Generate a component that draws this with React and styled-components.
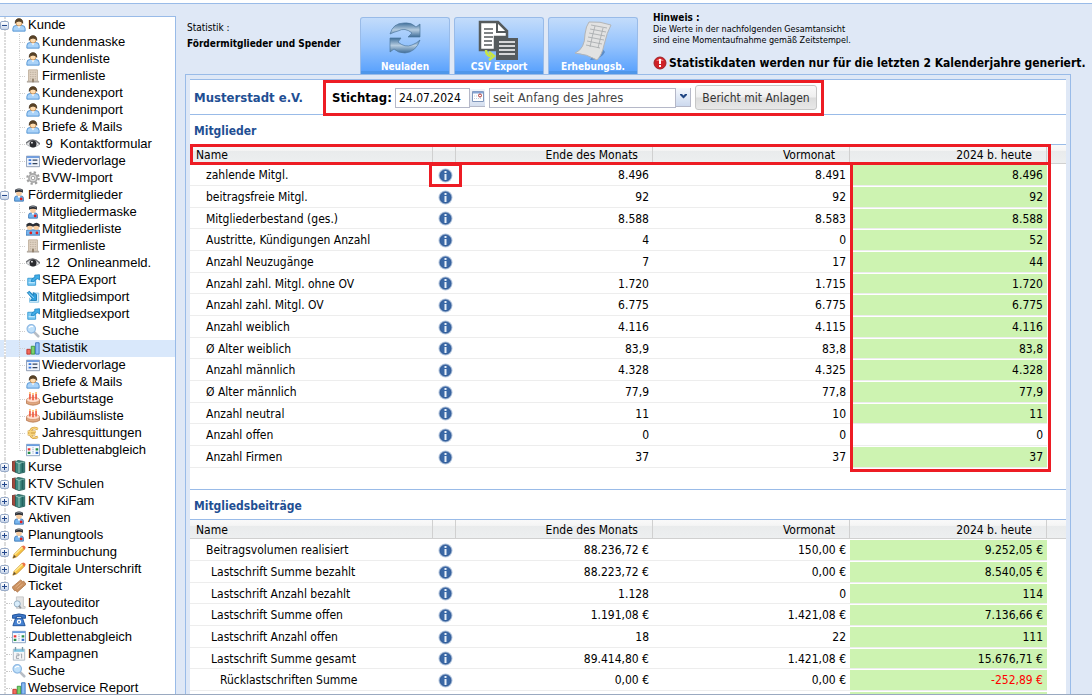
import React from "react";
import styled, { createGlobalStyle } from "styled-components";

const GlobalStyle = createGlobalStyle`
  * {
    box-sizing: border-box;
  }
  body {
    margin: 0;
    background: #fff;
    color: #000;
    font-family: "DejaVu Sans Condensed", "DejaVu Sans", sans-serif;
    font-size: 12px;
  }
  button, input, select {
    font-family: inherit;
  }
`;

const Shell = styled.div`
  display: flex;
  height: 100vh;
  padding-top: 3px;
  border-bottom: 1px solid #9aa9c0;
  overflow: hidden;
`;

const Side = styled.nav`
  flex: 0 0 176px;
  display: flex;
  padding-top: 12px;
  background: #dfe8f6;
  border-top: 1px solid #99bbe8;
`;

const Tree = styled.ul`
  flex: 1;
  min-width: 0;
  margin: 0;
  padding: 0;
  list-style: none;
  overflow: auto;
  scrollbar-width: none;
  background: #fff;
  border-top: 1px solid #99bbe8;
  border-right: 1px solid #99bbe8;
`;

const Branch = styled.ul`
  margin: 0;
  padding: 0;
  list-style: none;
`;

const Row = styled.div`
  display: flex;
  align-items: center;
  height: 17px;
  background: ${(p) => (p.$selected ? "#d9e8fb" : "transparent")};
`;

const Gutter = styled.span`
  align-self: stretch;
  flex: 0 0 12px;
  display: flex;
  align-items: center;
  background: repeating-linear-gradient(#dcdcdc 0 2px, #fff 2px 3px) 4px 0 / 2px 100% no-repeat;
`;

const Elbow = styled.span`
  align-self: stretch;
  flex: 0 0 14px;
  background:
    repeating-linear-gradient(#d0d0d0 0 1px, transparent 1px 2px) 7px 0 / 1px ${(p) => (p.$last ? "50%" : "100%")} no-repeat,
    repeating-linear-gradient(90deg, #d0d0d0 0 1px, transparent 1px 2px) 8px 50% / 5px 1px no-repeat;
`;

const Dash = styled.span`
  width: 6px;
  margin-left: 6px;
  border-top: 1px dotted #c8c8c8;
`;

const Expander = styled.button`
  display: flex;
  align-items: center;
  justify-content: center;
  width: 9px;
  height: 9px;
  padding: 0;
  border: 1px solid #98abc8;
  border-radius: 2px;
  background: linear-gradient(#fff, #c9d6ea);
`;

const TreeLink = styled.a`
  display: flex;
  align-items: center;
  gap: 2px;
  flex: 1;
  min-width: 0;
  padding-bottom: 2px;
  color: #000;
  font-family: "Liberation Sans", Arial, sans-serif;
  font-size: 13px;
  line-height: 15px;
  white-space: pre;
  text-decoration: none;
  svg {
    flex: none;
  }
`;

const Main = styled.main`
  flex: 1;
  min-width: 0;
  display: flex;
  flex-direction: column;
  padding: 0 21px 0 9px;
  background: #dfe8f6;
  border-top: 1px solid #99bbe8;
`;

const Header = styled.header`
  display: flex;
  height: 70px;
  padding-left: 2px;
  margin-right: -21px;
  white-space: nowrap;
`;

const PageTitle = styled.div`
  flex: 0 0 173px;
  padding-top: 16px;
  font-size: 10px;
  line-height: 16px;
`;

const ToolButtons = styled.div`
  display: flex;
  align-items: flex-end;
  gap: 4px;
`;

const ToolButton = styled.button`
  display: flex;
  flex-direction: column;
  align-items: center;
  justify-content: space-between;
  width: 90px;
  height: 57px;
  padding: 2px 0 1px;
  border: 1px solid #99bbe8;
  border-bottom: 0;
  border-radius: 3px 3px 0 0;
  background: linear-gradient(#c3dcfb, #93c2fd 50%, #559ffd);
  box-shadow: inset 0 -3px #4f97ea;
  color: #fff;
  font-size: 10px;
  font-weight: bold;
  line-height: 12px;
  svg {
    margin-bottom: -4px;
  }
`;

const Notice = styled.div`
  padding: 7px 0 0 15px;
  font-size: 9px;
  line-height: 11px;
`;

const NoticeTitle = styled.div`
  font-size: 10px;
  font-weight: bold;
  line-height: 13px;
`;

const Warning = styled.div`
  display: flex;
  align-items: center;
  gap: 2px;
  margin-top: 9px;
  font-size: 12px;
  font-weight: bold;
  line-height: 16px;
`;

const Panel = styled.div`
  flex: 1;
  min-height: 0;
  padding: 4px 4px 0;
  overflow: auto;
  scrollbar-width: none;
  border: 1px solid #99bbe8;
  border-bottom: 0;
`;

const Sheet = styled.div`
  background: #fff;
`;

const Filter = styled.form`
  display: flex;
  align-items: center;
  height: 36px;
  padding-left: 4px;
  border-top: 1px solid #99bbe8;
  border-bottom: 1px solid #99bbe8;
`;

const Club = styled.div`
  flex: 0 0 129px;
  color: #1f4f93;
  font-size: 13px;
  font-weight: bold;
`;

const Mark = styled.div`
  position: absolute;
  z-index: 1;
  border: 3px solid #ed1c24;
  pointer-events: none;
`;

const FilterMark = styled(Mark)`
  inset: 1px 0 -1px;
`;

const HeadMark = styled(Mark)`
  top: 0;
  left: 0;
  right: 15px;
  height: 21px;
`;

const ColumnMark = styled(Mark)`
  top: 18px;
  right: 15px;
  bottom: -4px;
  width: 201px;
`;

const InfoMark = styled(Mark)`
  inset: -2px -6px -2px -4px;
`;

const Controls = styled.div`
  position: relative;
  display: flex;
  align-items: center;
  height: 36px;
  padding: 1px 7px 0 9px;
`;

const DateLabel = styled.label`
  width: 63px;
  font-size: 13px;
  font-weight: bold;
`;

const DateInput = styled.input`
  width: 75px;
  height: 20px;
  padding: 0 3px;
  border: 1px solid #b5b8c8;
  font-size: 12px;
  outline: none;
`;

const Trigger = styled.button`
  display: flex;
  align-items: flex-start;
  justify-content: center;
  width: 15px;
  height: 18px;
  margin-right: 4px;
  padding: 2px 0 0;
  border: 0;
  border-bottom: 1px solid #b5b8c8;
  background: linear-gradient(#f3f6fb, #d5dfef);
`;

const SelectWrap = styled.div`
  position: relative;
  width: 202px;
  height: 20px;
`;

const Select = styled.select`
  appearance: none;
  width: 187px;
  height: 20px;
  padding: 0 3px;
  border: 1px solid #b5b8c8;
  border-radius: 0;
  background: #fff;
  color: #444;
  font-size: 13px;
`;

const Caret = styled.span`
  position: absolute;
  top: 0;
  right: 0;
  display: flex;
  align-items: center;
  justify-content: center;
  width: 16px;
  height: 19px;
  border: 1px solid #b5b8c8;
  border-top: 0;
  background: linear-gradient(#f5f8fd, #ccd9ee);
  pointer-events: none;
`;

const ReportButton = styled.button`
  width: 122px;
  height: 25px;
  margin-left: 4px;
  padding: 0;
  border: 1px solid #c6c6c6;
  border-radius: 3px;
  background: linear-gradient(#fafafa, #efefef 48%, #dcdcdc 52%, #e8e8e8);
  color: #333;
  font-size: 12px;
  white-space: nowrap;
`;

const Section = styled.section`
  padding-bottom: 21px;
  & + & {
    border-top: 1px solid #99bbe8;
  }
`;

const SectionTitle = styled.h2`
  margin: 0;
  padding: 2px 4px 0;
  height: 29px;
  color: #1f4f93;
  font-size: 12px;
  font-weight: bold;
  line-height: 29px;
`;

const TableWrap = styled.div`
  position: relative;
`;

const Table = styled.table`
  width: 100%;
  table-layout: fixed;
  border-spacing: 0;
  border-top: 1px solid #99bbe8;
`;

const Th = styled.th`
  width: ${(p) => p.$width};
  height: 19px;
  padding: ${(p) => (p.$right ? "2px 14px 0 0" : "2px 0 0 6px")};
  border-right: ${(p) => (p.$end ? "0" : "1px solid #d0d0d0")};
  border-bottom: 1px solid #d0d0d0;
  background: linear-gradient(#f9f9f9, #f5f5f5 30%, #e9ebec 34%, #edeff0);
  font-weight: normal;
  line-height: 16px;
  text-align: ${(p) => (p.$right ? "right" : "left")};
  white-space: nowrap;
`;

const Tr = styled.tr`
  height: 22px;
  &:nth-child(3n) {
    height: 21px;
  }
`;

const Td = styled.td`
  padding: 0 4px 0 0;
  border-top: 1px solid #fff;
  border-bottom: 1px solid #ededed;
  background: ${(p) => (p.$green ? "#cdf3b1" : "transparent")};
  background-clip: padding-box;
  color: ${(p) => (p.$negative ? "#f00" : "#000")};
  line-height: 18px;
  text-align: right;
  white-space: nowrap;
`;

const NameTd = styled(Td)`
  padding-left: ${(p) => p.$indent}px;
  text-align: left;
`;

const InfoTd = styled(Td)`
  position: relative;
  padding: 0;
  text-align: center;
`;

const InfoButton = styled.button`
  display: block;
  width: 15px;
  height: 15px;
  margin: 0 0 0 5px;
  padding: 0;
  border: 0;
  background: none;
`;

const drawings = {
  user: (
    <>
      <path d="M1 15V12Q1 8.500 5 8.500H11Q15 8.500 15 12V15Z" fill="#a9d2f8" stroke="#4c8fd0" />
      <path d="M6 8.500 8 12 10 8.500Z" fill="#fff" />
      <circle cx="8" cy="5.500" r="3.600" fill="#ffdcae" stroke="#b5702e" strokeWidth=".7" />
      <path d="M3.800 6Q3.500.8 8 .8T12.200 6Q11.500 3.500 8 3.500T3.800 6Z" fill="#5d4527" stroke="#46341e" />
    </>
  ),
  nurse: (
    <>
      <path d="M3 15V11.500Q3 9 6 9H10Q13 9 13 11.500V15Z" fill="#77b6ef" stroke="#3975b4" />
      <path d="M6.500 9 8 12 9.500 9Z" fill="#fff" />
      <circle cx="8" cy="6" r="3.200" fill="#f8cda0" />
      <path d="M3.500 5.500V2Q8-1 12.500 2V5.500Q11 4.200 8 4.200T3.500 5.500Z" fill="#2b2e35" />
      <path d="M4.500 2.500Q8 .5 11.500 2.500" fill="none" stroke="#8d939c" />
      <circle cx="10.500" cy="12.500" r="1.600" fill="#e12020" />
    </>
  ),
  nurses: (
    <>
      <path d="M0 15V11Q0 9 3 9H13Q16 9 16 11V15Z" fill="#77b6ef" stroke="#3975b4" />
      <circle cx="4.300" cy="6" r="3.200" fill="#f8cda0" />
      <circle cx="11.700" cy="6" r="3.200" fill="#f8cda0" />
      <path d="M.5 6V2.500Q4-1 8 2.500 12-1 15.500 2.500V6Q12 3 8 5.500 4 3 .5 6Z" fill="#2b2e35" />
      <circle cx="5.500" cy="12.500" r="1.600" fill="#e12020" />
      <circle cx="12.500" cy="12.500" r="1.600" fill="#e12020" />
    </>
  ),
  building: (
    <>
      <path d="M3 1H13V14H3Z" fill="#e3d6c6" stroke="#b7a793" />
      <path d="M5 3V12M7 3V12M9 3V12M11 3V12" stroke="#b9aa99" strokeDasharray="1.500 1" />
      <path d="M1 14.500H15" stroke="#b5aca2" strokeWidth="2" />
      <path d="M7 11H9V15H7Z" fill="#8f7d68" />
    </>
  ),
  eye: (
    <>
      <path d="M0 8Q8-1 16 8 8 15 0 8Z" fill="#e6e7e9" stroke="#a5a8ac" />
      <path d="M0 7Q8-.5 16 8" fill="none" stroke="#707277" strokeWidth="1.500" />
      <circle cx="8" cy="8" r="4" fill="#2b2c30" />
      <circle cx="6.800" cy="6.500" r="1" fill="#fff" />
    </>
  ),
  form: (
    <>
      <path d="M.5 2.500H15.500V14.500H.5Z" fill="#eef3fb" stroke="#8394ad" />
      <path d="M1 3.500H15" stroke="#6898dd" strokeWidth="2" />
      <path d="M3 7H6M3 11H6" stroke="#3874d8" strokeWidth="2" />
      <path d="M7.500 7H13M7.500 11H13" stroke="#34445c" strokeWidth="1.500" />
    </>
  ),
  gear: (
    <>
      <circle cx="8" cy="8" r="6.500" fill="none" stroke="#a0a0a0" strokeWidth="2.500" strokeDasharray="2.600 2.500" />
      <circle cx="8" cy="8" r="4.700" fill="#dcdcdc" stroke="#a8a8a8" strokeWidth="1.800" />
      <circle cx="8" cy="8" r="2" fill="#fff" stroke="#999" />
    </>
  ),
  export: (
    <>
      <path d="M2 6H11V14H2Z" fill="#7ecbf5" stroke="#3297d1" />
      <path d="M6 10Q6 5.500 10 5V2.500L15.500 2V8L13.500 6.500Q10 7 9 10Z" fill="#41aee8" stroke="#2187c4" />
      <path d="M3 11H10" stroke="#d4f1ff" />
    </>
  ),
  import: (
    <>
      <path d="M7 3.500H14.500V14H4V9" fill="#d4effc" stroke="#84c4e6" />
      <path d="M1.500 3 4 1.500 8.500 6V3L12 5V12H5L7 9.500Z" fill="#2e9fde" stroke="#1a79b4" />
      <path d="M3 3.500 9 9" stroke="#a6dcf8" />
    </>
  ),
  search: (
    <>
      <path d="M9 9 14 14" stroke="#b7bdc5" strokeWidth="3" strokeLinecap="round" />
      <circle cx="6" cy="5.500" r="4.800" fill="#bfe0fa" stroke="#8fb9e3" strokeWidth="1.400" />
      <path d="M3.500 4.500Q5 2 8 3" fill="none" stroke="#fff" strokeWidth="1.300" />
    </>
  ),
  chart: (
    <>
      <path d="M1 9.500H5V15H1Z" fill="#f26c5f" stroke="#bd3028" />
      <path d="M6 6H10V15H6Z" fill="#7cd26b" stroke="#37943a" />
      <path d="M11 2H15V15H11Z" fill="#8cbdf5" stroke="#316fba" />
    </>
  ),
  cake: (
    <>
      <path d="M.5 9H15.500V13Q8 17 .5 13Z" fill="#e0a880" stroke="#b87b55" />
      <ellipse cx="8" cy="9" rx="7.500" ry="3" fill="#ffdfce" stroke="#cc8963" strokeWidth=".7" />
      <path d="M4.500 2V8.500M8 3V9.500M11.500 2V8.500" stroke="#ef543a" strokeWidth="1.800" />
      <path d="M4.500 0V2M8 1V3M11.500 0V2" stroke="#ffad43" strokeWidth="1.500" />
    </>
  ),
  euro: (
    <>
      <path d="M13.500 3.500Q6-.5 4.500 8 6 16 13.500 12.500M2 6.500H11M2 9.500H10.500" fill="none" stroke="#c99437" strokeWidth="2.800" />
      <path d="M13.500 3.500Q6-.5 4.500 8 6 16 13.500 12.500M2 6.500H11M2 9.500H10.500" fill="none" stroke="#f8d57d" strokeWidth="1.600" />
    </>
  ),
  list: (
    <>
      <path d="M.5 1.500H15.500V14.500H.5Z" fill="#f6faff" stroke="#809bbb" />
      <path d="M1 2.500H15" stroke="#679de0" strokeWidth="2" />
      <path d="M2 6H5V8.500H2Z" fill="#e33" />
      <path d="M2 10H5V12.500H2ZM11 6H14V8.500H11Z" fill="#288f46" />
      <path d="M11 10H14V12.500H11Z" fill="#326dca" />
      <path d="M8 5V13" stroke="#6f87a5" strokeDasharray="1 1" />
    </>
  ),
  books: (
    <>
      <path d="M0 2 4 1V14L0 12Z" fill="#a0493d" stroke="#71342c" />
      <path d="M4 2 7 .5 14.500 2V14L8 15.500 4 14Z" fill="#3f8880" stroke="#28605c" />
      <path d="M4 2 8 4 14.500 2M8 4V15" fill="none" stroke="#a9d5cb" />
      <path d="M12 3V14" stroke="#22625f" strokeWidth="2" />
    </>
  ),
  pencil: (
    <>
      <path d="M1 15 2.500 10.500 11.500 1.500 14.500 4.500 5.500 13.500Z" fill="#f8c443" stroke="#c99330" />
      <path d="M11 2 12.500.5Q15.500.5 15.500 3.500L14 5Z" fill="#ed7148" />
      <path d="M3 11 12 2.500" stroke="#ffec9a" strokeWidth="1.500" />
      <path d="M1 15 2.500 11.500 4.500 13.500Z" fill="#594c3c" />
    </>
  ),
  ticket: (
    <>
      <path d="M0 9.500 10 1 12 3 13.500 2.500 16 6 6 15 4.500 13 3 13.500Z" fill="#cb9160" stroke="#b07a4e" />
      <path d="M4 9 10 4M6 11 12 6" stroke="#e5b88e" />
    </>
  ),
  layout: (
    <>
      <path d="M5 1H13V12H15V14H5Z" fill="#e4e4e4" stroke="#c2c2c2" />
      <circle cx="6" cy="9" r="3.500" fill="#d9edfb" stroke="#8ba7bd" />
      <path d="M8 11 10 14" stroke="#8b929b" strokeWidth="2" />
    </>
  ),
  phone: (
    <>
      <path d="M.5 2.500Q8-.5 15.500 2.500V6H11V4H5V6H.5Z" fill="#3d77c9" stroke="#174b95" />
      <path d="M4 6H12L15 14.500H1Z" fill="#4682d2" stroke="#174b95" />
      <circle cx="8" cy="10" r="2.500" fill="#fff" />
      <circle cx="8" cy="10" r="1" fill="#346ab1" />
    </>
  ),
  calendar: (
    <>
      <path d="M1.500 2.500H14.500V15H1.500Z" fill="#f5f6f8" stroke="#a8b5bf" />
      <path d="M2 4H14" stroke="#7fc7e5" strokeWidth="3" />
      <path d="M4 0V4M12 0V4" stroke="#7c99aa" strokeWidth="1.500" />
      <path d="M5 8H8V10H5V13H8M10 8H11V13" fill="none" stroke="#939aa3" />
    </>
  ),
};

const Icon = ({ name }) => (
  <svg width="14" height="14" viewBox="0 0 16 16" aria-hidden="true">
    {drawings[name]}
  </svg>
);

const InfoIcon = () => (
  <svg width="15" height="15" viewBox="0 0 15 15" aria-hidden="true">
    <circle cx="7.500" cy="7.500" r="7" fill="#b3c5dd" />
    <circle cx="7.500" cy="7.500" r="5.500" fill="#3a68a6" stroke="#2b5796" />
    <path d="M6.500 3H8.500V5H6.500ZM6.500 6H8.500V12H6.500Z" fill="#e8eff8" />
  </svg>
);

const AlertIcon = () => (
  <svg width="14" height="14" viewBox="0 0 14 14" aria-hidden="true">
    <circle cx="7" cy="7" r="6" fill="#cf2127" stroke="#9e2327" />
    <path d="M3 5Q7 0 11 5" fill="#ed7474" />
    <path d="M6 3H8V8H6ZM6 9H8V11H6Z" fill="#fff" />
  </svg>
);

const ReloadIcon = () => (
  <svg width="34" height="38" viewBox="0 0 34 38" aria-hidden="true">
    <defs>
      <linearGradient id="steel" x2="0" y2="1">
        <stop stopColor="#3f6f9b" />
        <stop offset=".5" stopColor="#b5cce0" />
        <stop offset="1" stopColor="#3d6c98" />
      </linearGradient>
    </defs>
    <path d="M2 14Q5 3 16 3Q23 2 28 7L32 4V17H20L24 13Q17 7 10 11Q6 12 2 14Z" fill="url(#steel)" stroke="#4f799f" strokeWidth=".7" />
    <path d="M32 20Q28 32 17 33Q10 33 6 29L2 32V18H13L10 22Q17 28 24 25Q29 23 32 20Z" fill="url(#steel)" stroke="#4f799f" strokeWidth=".7" />
  </svg>
);

const CsvIcon = () => (
  <svg width="42" height="43" viewBox="0 0 42 43" aria-hidden="true">
    <path d="M2 2H20L29 11V17H17V30H2Z" fill="#fff" stroke="#555b5d" strokeWidth="2.500" />
    <path d="M19 2V12H29" fill="none" stroke="#555b5d" strokeWidth="2" />
    <path d="M6 9H15M6 13H15M6 17H15M6 21H14M6 25H14" stroke="#555b5d" strokeWidth="1.500" />
    <path d="M18 18H40V40H18Z" fill="#555b5d" />
    <path d="M21 22H37M21 26H37M21 30H37M21 34H37" stroke="#fff" strokeWidth="1.500" />
    <path d="M8 30Q8 36 13 36M11 32 16 36 11 40" fill="none" stroke="#c8e546" strokeWidth="2.500" />
  </svg>
);

const SheetIcon = () => (
  <svg width="40" height="41" viewBox="0 0 40 41" aria-hidden="true">
    <path d="M17 40Q29 39 32 32L28 27Z" fill="#315e91" opacity=".5" />
    <path d="M16 2Q27 1 38 5Q34 12 31 25Q29 35 24 40Q14 34 2 33Q12 29 12 14Q13 6 16 2Z" fill="#e2e2e2" stroke="#b2b5b8" />
    <path d="M18 5 34 8M17 9 33 12M16 13 32 16M15 17 31 20M14 21 29 24M13 25 27 28M22 6Q19 17 17 27M30 8 25 28" fill="none" stroke="#a5a8ab" strokeWidth=".8" />
  </svg>
);

const tree = [
  {
    icon: "user",
    label: "Kunde",
    children: [
      ["user", "Kundenmaske"],
      ["user", "Kundenliste"],
      ["building", "Firmenliste"],
      ["user", "Kundenexport"],
      ["user", "Kundenimport"],
      ["user", "Briefe & Mails"],
      ["eye", "9  Kontaktformular"],
      ["form", "Wiedervorlage"],
      ["gear", "BVW-Import"],
    ],
  },
  {
    icon: "nurse",
    label: "Fördermitglieder",
    children: [
      ["nurse", "Mitgliedermaske"],
      ["nurses", "Mitgliederliste"],
      ["building", "Firmenliste"],
      ["eye", "12  Onlineanmeld."],
      ["export", "SEPA Export"],
      ["import", "Mitgliedsimport"],
      ["export", "Mitgliedsexport"],
      ["search", "Suche"],
      ["chart", "Statistik"],
      ["form", "Wiedervorlage"],
      ["user", "Briefe & Mails"],
      ["cake", "Geburtstage"],
      ["cake", "Jubiläumsliste"],
      ["euro", "Jahresquittungen"],
      ["list", "Dublettenabgleich"],
    ],
  },
  { icon: "books", label: "Kurse", closed: true },
  { icon: "books", label: "KTV Schulen", closed: true },
  { icon: "books", label: "KTV KiFam", closed: true },
  { icon: "nurse", label: "Aktiven", closed: true },
  { icon: "nurse", label: "Planungtools", closed: true },
  { icon: "pencil", label: "Terminbuchung", closed: true },
  { icon: "pencil", label: "Digitale Unterschrift", closed: true },
  { icon: "ticket", label: "Ticket", closed: true },
  { icon: "layout", label: "Layouteditor" },
  { icon: "phone", label: "Telefonbuch" },
  { icon: "list", label: "Dublettenabgleich" },
  { icon: "calendar", label: "Kampagnen" },
  { icon: "search", label: "Suche" },
  { icon: "chart", label: "Webservice Report" },
];

// name, end of month, previous month, year to date
const members = [
  ["zahlende Mitgl.", "8.496", "8.491", "8.496"],
  ["beitragsfreie Mitgl.", "92", "92", "92"],
  ["Mitgliederbestand (ges.)", "8.588", "8.583", "8.588"],
  ["Austritte, Kündigungen Anzahl", "4", "0", "52"],
  ["Anzahl Neuzugänge", "7", "17", "44"],
  ["Anzahl zahl. Mitgl. ohne OV", "1.720", "1.715", "1.720"],
  ["Anzahl zahl. Mitgl. OV", "6.775", "6.775", "6.775"],
  ["Anzahl weiblich", "4.116", "4.115", "4.116"],
  ["Ø Alter weiblich", "83,9", "83,8", "83,8"],
  ["Anzahl männlich", "4.328", "4.325", "4.328"],
  ["Ø Alter männlich", "77,9", "77,8", "77,9"],
  ["Anzahl neutral", "11", "10", "11"],
  ["Anzahl offen", "0", "0", "0"],
  ["Anzahl Firmen", "37", "37", "37"],
];

const fees = [
  ["Beitragsvolumen realisiert", "88.236,72 €", "150,00 €", "9.252,05 €"],
  ["Lastschrift Summe bezahlt", "88.223,72 €", "0,00 €", "8.540,05 €", 1],
  ["Lastschrift Anzahl bezahlt", "1.128", "0", "114", 1],
  ["Lastschrift Summe offen", "1.191,08 €", "1.421,08 €", "7.136,66 €", 1],
  ["Lastschrift Anzahl offen", "18", "22", "111", 1],
  ["Lastschrift Summe gesamt", "89.414,80 €", "1.421,08 €", "15.676,71 €", 1],
  ["Rücklastschriften Summe", "0,00 €", "0,00 €", "-252,89 €", 2],
];

const indents = [16, 21, 30];

const TreeNode = ({ node }) => (
  <li>
    <Row>
      <Gutter>
        {node.children || node.closed ? (
          <Expander aria-label={node.label}>
            <svg width="5" height="5" viewBox="0 0 5 5">
              <path d={node.closed ? "M0 2.500H5M2.500 0V5" : "M0 2.500H5"} stroke="#24488c" />
            </svg>
          </Expander>
        ) : (
          <Dash />
        )}
      </Gutter>
      <TreeLink href="#">
        <Icon name={node.icon} />
        {node.label}
      </TreeLink>
    </Row>
    {node.children && (
      <Branch>
        {node.children.map(([icon, label], index) => (
          <li key={index}>
            <Row $selected={label === "Statistik"}>
              <Gutter />
              <Elbow $last={index === node.children.length - 1} />
              <TreeLink href="#">
                <Icon name={icon} />
                {icon === "eye" ? " " + label : label}
              </TreeLink>
            </Row>
          </li>
        ))}
      </Branch>
    )}
  </li>
);

const StatTable = ({ title, rows, marked, more }) => (
  <Section>
    <SectionTitle>{title}</SectionTitle>
    <TableWrap>
      <Table>
        <thead>
          <tr>
            <Th>Name</Th>
            <Th $width="23px" aria-label="Info" />
            <Th $width="197px" $right>Ende des Monats</Th>
            <Th $width="197px" $right>Vormonat</Th>
            <Th $width="197px" $right>2024 b. heute</Th>
            <Th $width="19px" $end aria-hidden="true" />
          </tr>
        </thead>
        <tbody>
          {rows.map(([name, month, previous, year, level = 0], index) => (
            <Tr key={index}>
              <NameTd $indent={indents[level]}>{name}</NameTd>
              <InfoTd>
                <InfoButton aria-label={"Info " + name}>
                  <InfoIcon />
                </InfoButton>
                {marked && index === 0 && <InfoMark />}
              </InfoTd>
              <Td>{month}</Td>
              <Td>{previous}</Td>
              <Td $green={year !== "0"} $negative={year.startsWith("-")}>{year}</Td>
            </Tr>
          ))}
          {more && (
            <Tr>
              <Td colSpan="4" />
              <Td $green />
            </Tr>
          )}
        </tbody>
      </Table>
      {marked && (
        <>
          <HeadMark />
          <ColumnMark />
        </>
      )}
    </TableWrap>
  </Section>
);

const App = () => {
  return (
    <>
      <GlobalStyle />
      <Shell>
        <Side>
          <Tree>
            {tree.map((node, index) => (
              <TreeNode key={index} node={node} />
            ))}
          </Tree>
        </Side>
        <Main>
          <Header>
            <PageTitle>
              Statistik :
              <br />
              <b>Fördermitglieder und Spender</b>
            </PageTitle>
            <ToolButtons>
              <ToolButton>
                <ReloadIcon />
                Neuladen
              </ToolButton>
              <ToolButton>
                <CsvIcon />
                CSV Export
              </ToolButton>
              <ToolButton>
                <SheetIcon />
                Erhebungsb.
              </ToolButton>
            </ToolButtons>
            <Notice>
              <NoticeTitle>Hinweis :</NoticeTitle>
              Die Werte in der nachfolgenden Gesamtansicht
              <br />
              sind eine Momentaufnahme gemäß Zeitstempel.
              <Warning>
                <AlertIcon />
                Statistikdaten werden nur für die letzten 2 Kalenderjahre generiert.
              </Warning>
            </Notice>
          </Header>
          <Panel>
            <Sheet>
              <Filter onSubmit={(e) => e.preventDefault()}>
                <Club>Musterstadt e.V.</Club>
                <Controls>
                  <DateLabel htmlFor="date">Stichtag:</DateLabel>
                  <DateInput id="date" defaultValue="24.07.2024" />
                  <Trigger type="button" aria-label="Kalender">
                    <svg width="12" height="11" viewBox="0 0 12 11">
                      <path d="M.5.500H11.500V10.500H.5Z" fill="#fff" stroke="#8097bb" />
                      <path d="M1 1.500H11" stroke="#85a4d4" strokeWidth="2" />
                      <circle cx="8" cy="4.500" r="1.500" fill="none" stroke="#ad3434" />
                      <path d="M2 5H6M2 7.500H10" stroke="#bdcbe0" strokeDasharray="1 1" />
                    </svg>
                  </Trigger>
                  <SelectWrap>
                    <Select aria-label="Zeitraum">
                      <option>seit Anfang des Jahres</option>
                    </Select>
                    <Caret>
                      <svg width="7" height="5" viewBox="0 0 7 5">
                        <path d="M0 0H2L3.500 1.500 5 0H7V1L3.500 4.500 0 1Z" fill="#1f4583" />
                      </svg>
                    </Caret>
                  </SelectWrap>
                  <ReportButton type="button">Bericht mit Anlagen</ReportButton>
                  <FilterMark />
                </Controls>
              </Filter>
              <StatTable title="Mitglieder" rows={members} marked />
              <StatTable title="Mitgliedsbeiträge" rows={fees} more />
            </Sheet>
          </Panel>
        </Main>
      </Shell>
    </>
  );
};

export default App;
